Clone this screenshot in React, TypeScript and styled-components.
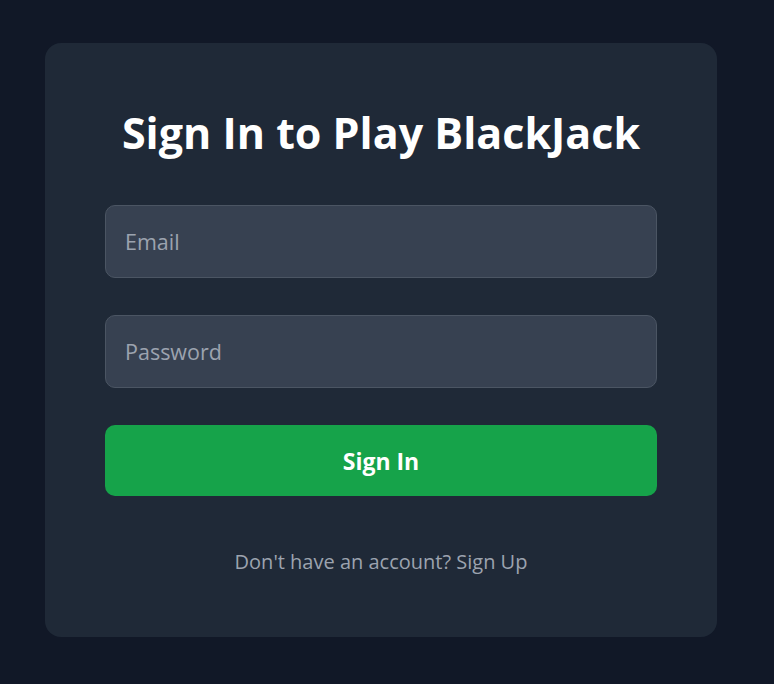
import React from "react";
import styled, { createGlobalStyle } from "styled-components";

const GlobalStyle = createGlobalStyle`
  html, body {
    margin: 0;
    padding: 0;
    background: #111827;
  }
  body {
    font-family: "Open Sans", "Noto Sans", sans-serif;
  }
`;

const Page = styled.div`
  min-height: 684px;
  padding: 43px 0 0 45px;
  box-sizing: border-box;
`;

const Card = styled.div`
  width: 672px;
  height: 594px;
  box-sizing: border-box;
  padding: 60px;
  background: #1f2937;
  border-radius: 16px;
  display: flex;
  flex-direction: column;
`;

const Title = styled.h1`
  margin: 0 0 42px;
  font-size: 43px;
  line-height: 60px;
  font-weight: 700;
  color: #ffffff;
  text-align: center;
`;

const Form = styled.form`
  display: flex;
  flex-direction: column;
  gap: 37px;
`;

const Input = styled.input`
  height: 73px;
  box-sizing: border-box;
  padding: 0 19px;
  background: #374151;
  border: 1px solid #4b5563;
  border-radius: 10px;
  color: #ffffff;
  font-family: inherit;
  font-size: 21.5px;
  outline: none;
  &::placeholder {
    color: #9ca3af;
  }
`;

const Button = styled.button`
  height: 71px;
  border: none;
  border-radius: 10px;
  background: #16a34a;
  color: #ffffff;
  font-family: inherit;
  font-size: 23px;
  font-weight: 700;
  cursor: pointer;
`;

const Footer = styled.p`
  margin: 51px 0 0;
  font-size: 20px;
  line-height: 30px;
  color: #9ca3af;
  text-align: center;
`;

export default function App() {
  return (
    <>
      <GlobalStyle />
      <Page>
        <Card>
          <Title>Sign In to Play BlackJack</Title>
          <Form onSubmit={(e) => e.preventDefault()}>
            <Input type="email" placeholder="Email" />
            <Input type="password" placeholder="Password" />
            <Button type="submit">Sign In</Button>
          </Form>
          <Footer>Don't have an account? Sign Up</Footer>
        </Card>
      </Page>
    </>
  );
}
